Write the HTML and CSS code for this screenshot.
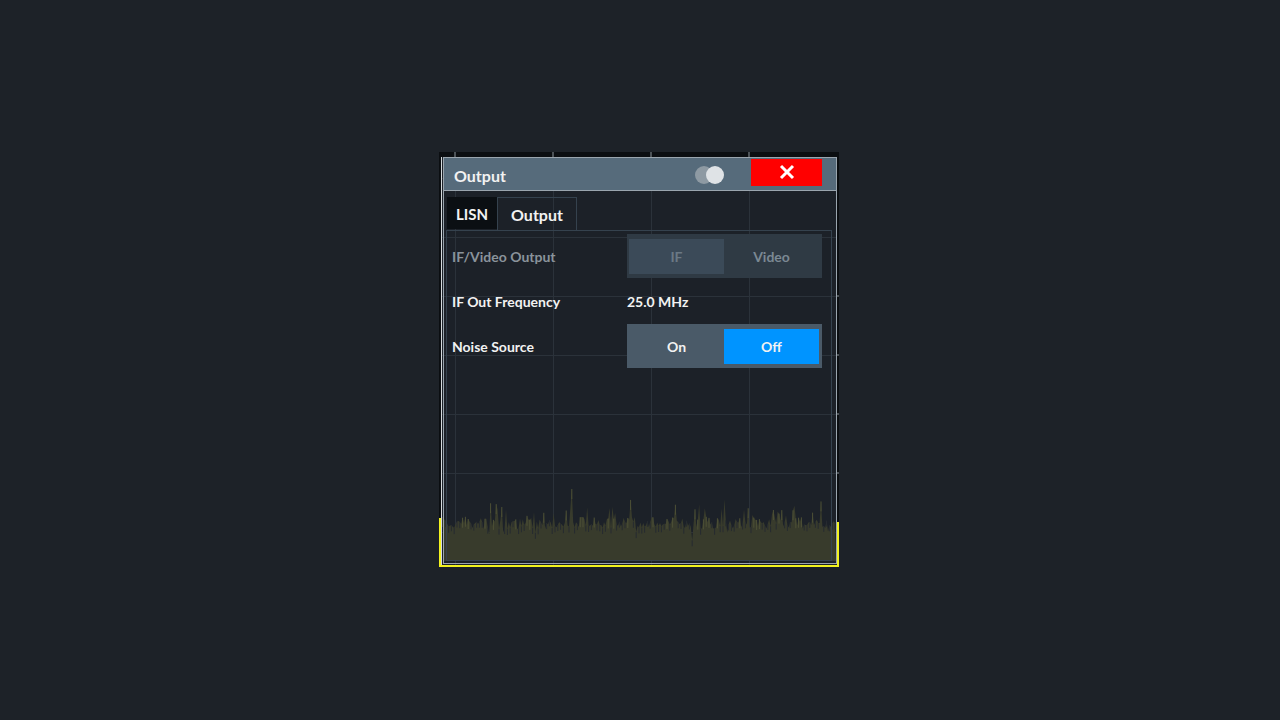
FILE: index.html
```html
<!DOCTYPE html>
<html lang="en">
<head>
<meta charset="UTF-8">
<title>Output</title>
<link rel="stylesheet" href="styles.css">
</head>
<body>

<div class="scope">
  <div class="plot"></div>
  <svg class="trace" id="trace" width="400" height="415" viewBox="0 0 400 415"></svg>

  <div class="dialog">
    <div class="titlebar">
      <span class="title">Output</span>
      <svg class="dock" width="32" height="20" viewBox="0 0 32 20">
        <circle cx="10" cy="10" r="9" fill="#8e9aa3"/>
        <circle cx="21" cy="10" r="9" fill="#dfe3e6"/>
      </svg>
      <button class="close" aria-label="close">
        <svg width="16" height="16" viewBox="0 0 16 16"><path d="M2 2L14 14M14 2L2 14" stroke="#fff" stroke-width="3"/></svg>
      </button>
    </div>

    <div class="body">
      <div class="tabs">
        <div class="tab">LISN</div>
        <div class="tab active">Output</div>
      </div>
      <div class="panel">
        <div class="row">
          <span class="label dim">IF/Video Output</span>
          <div class="seg disabled">
            <span class="opt on">IF</span>
            <span class="opt">Video</span>
          </div>
        </div>
        <div class="row">
          <span class="label">IF Out Frequency</span>
          <span class="value">25.0 MHz</span>
        </div>
        <div class="row">
          <span class="label">Noise Source</span>
          <div class="seg">
            <span class="opt">On</span>
            <span class="opt on">Off</span>
          </div>
        </div>
      </div>
    </div>
  </div>
</div>

<script src="trace.js"></script>
</body>
</html>
```

FILE: styles.css
```css
html,body{
  margin:0;
  padding:0;
  background:#1d2228;
  color:#f2f2f2;
  font-family:"Lato","Open Sans",sans-serif;
  font-weight:700;
}
body{
  height:100vh;
  box-sizing:border-box;
  padding:0 2px 2px 0;
  display:flex;
  align-items:center;
  justify-content:center;
}

/* ----------  SCOPE BEHIND  ---------- */
.scope{
  position:relative;
  width:400px;
  height:415px;
  box-sizing:border-box;
  padding:5px 2px 2px 2px;
  background:#0b0e11;
}
.plot{
  height:100%;
  box-sizing:border-box;
  border-left:1px solid #d5dadd;
  background-color:#1c2128;
  background-image:
    linear-gradient(to right,#2b323a 1px,transparent 1px),
    linear-gradient(to bottom,#2b323a 1px,transparent 1px);
  background-size:98px 59px;
  background-position:13px 21px;
}
.trace{
  position:absolute;
  left:0;
  top:0;
}

/* ----------  DIALOG  ---------- */
.dialog{
  position:absolute;
  left:4px;
  top:5px;
  width:394px;
  height:407px;
  box-sizing:border-box;
  border:1px solid #9aa5ae;
  display:flex;
  flex-direction:column;
}
.titlebar{
  height:32px;
  flex:none;
  background:#566b7b;
  border-bottom:1px solid #9aa5ae;
  display:flex;
  align-items:flex-start;
}
.title{
  font-size:16px;
  line-height:32px;
  padding-left:10px;
  margin-top:2px;
  flex:1;
}
.dock{
  margin-top:7px;
  margin-right:25px;
}
.close{
  width:71px;
  height:27px;
  margin-top:1px;
  margin-right:14px;
  border:0;
  padding:0;
  background:#ff0000;
  display:flex;
  align-items:center;
  justify-content:center;
}

.body{
  flex:1;
  display:flex;
  flex-direction:column;
  padding:6px 4px 2px 2px;
}
.tabs{
  display:flex;
  align-items:flex-end;
  padding-left:1px;
}
.tab{
  font-size:15px;
  height:32px;
  line-height:34px;
  padding:0 9px;
  background:#0b0f13;
  margin-bottom:1px;
}
.tab.active{
  font-size:16px;
  height:33px;
  padding:0 13px 0 13px;
  background:transparent;
  border:1px solid #35424e;
  border-bottom:0;
  margin-bottom:-1px;
  position:relative;
}
.panel{
  flex:1;
  border:1px solid #35424e;
  padding:3px 0 0 5px;
}
.row{
  display:flex;
  align-items:center;
  height:44px;
  font-size:14px;
}
.row + .row{margin-top:1px}
.label,.value{padding-top:2px}
.label{
  width:175px;
  flex:none;
}
.label.dim{color:#8a939b}

.seg{
  width:195px;
  height:44px;
  box-sizing:border-box;
  padding:5px 3px 4px 2px;
  display:flex;
  background:#4a5a68;
}
.opt{
  flex:1;
  display:flex;
  align-items:center;
  justify-content:center;
  padding-top:1px;
}
.opt.on{background:#0094ff}
.seg.disabled{background:#2f3a44;color:#7b8893}
.seg.disabled .opt.on{background:#3b4a58;color:#6b7985}
```

FILE: trace.js
```js
/* ----- noise floor trace + frame marks ----- */
const svg = document.getElementById('trace');
const NS  = 'http://www.w3.org/2000/svg';

let seed = 7;
function rnd(){ seed = (seed*16807) % 2147483647; return seed/2147483647; }

function el(name, attrs){
  const e = document.createElementNS(NS, name);
  for (const k in attrs) e.setAttribute(k, attrs[k]);
  svg.appendChild(e);
  return e;
}

// ticks on the top strip and the right edge
[16,114,212,310].forEach(x=>el('line',{x1:x,y1:0,x2:x,y2:5,stroke:'#8d969d','stroke-width':1}));
[144,203,262,321].forEach(y=>el('line',{x1:397,y1:y,x2:400,y2:y,stroke:'#8d969d','stroke-width':1}));

// noise
const pts = [];
for (let x=4; x<=397; x+=1.4){
  let y = 371 + (rnd()-0.5)*12;
  if (rnd()<0.12) y -= 6 + rnd()*14;
  if (rnd()<0.05) y += 6 + rnd()*8;
  pts.push([x,y]);
}
pts[Math.floor(pts.length*0.33)][1] = 337;

let d = 'M4 409 ';
pts.forEach(p=>{ d += 'L'+p[0].toFixed(1)+' '+p[1].toFixed(1)+' '; });
d += 'L397 409 Z';
el('path',{d:d, fill:'#383b2c'});

pts.forEach((p,i)=>{
  if (i%2) return;
  const up = p[1] < 368;
  el('line',{x1:p[0],y1:p[1],x2:p[0],y2:p[1]+(up?10:6),
    stroke: up ? '#4d5036' : '#262b30','stroke-width':1});
});

// yellow frame of the trace
el('polyline',{points:'1,366 1,414 399,414 399,370',fill:'none',stroke:'#f2f21e','stroke-width':2});
```
